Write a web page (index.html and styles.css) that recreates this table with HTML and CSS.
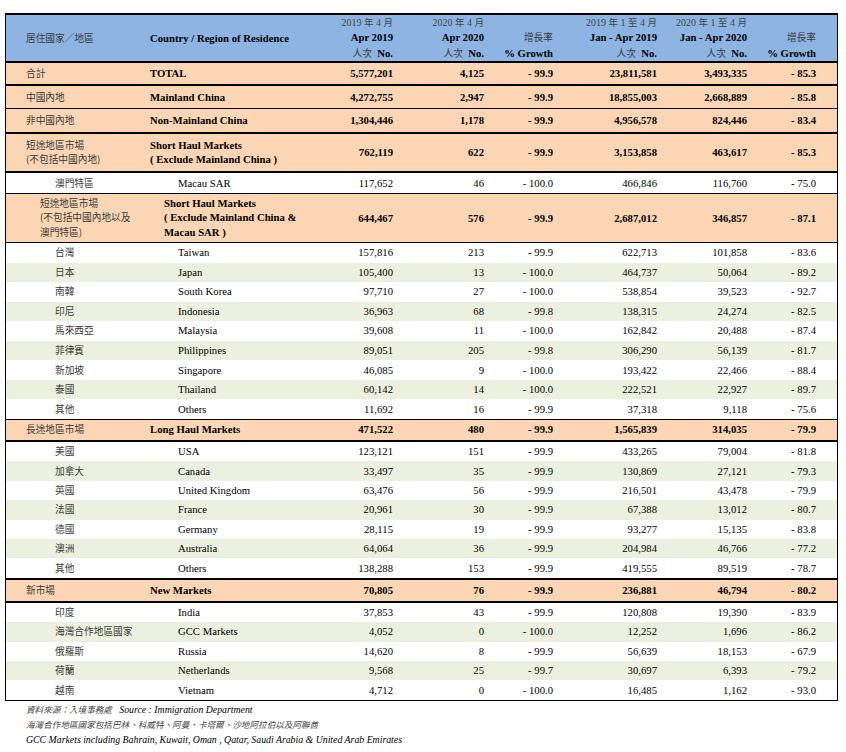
FILE: index.html
```html
<!DOCTYPE html>
<html lang="zh-Hant">
<head>
<meta charset="utf-8">
<title>Visitor Arrivals by Country / Region of Residence</title>
<link rel="stylesheet" href="styles.css">
</head>
<body>
<div class="page">
  <div class="table">
    <div class="row head">
      <div class="c c1 mid"><span class="zh">居住國家／地區</span></div>
      <div class="c c2 mid b">Country / Region of Residence</div>
      <div class="c num hd"><span class="sm">2019 <span class="zh">年</span> 4 <span class="zh">月</span></span><span class="b">Apr 2019</span><span><span class="zh">人次</span>&nbsp; <b>No.</b></span></div>
      <div class="c num hd"><span class="sm">2020 <span class="zh">年</span> 4 <span class="zh">月</span></span><span class="b">Apr 2020</span><span><span class="zh">人次</span>&nbsp; <b>No.</b></span></div>
      <div class="c num hd end"><span class="zh">增長率</span><span class="b">% Growth</span></div>
      <div class="c num hd"><span class="sm">2019 <span class="zh">年</span> 1 <span class="zh">至</span> 4 <span class="zh">月</span></span><span class="b">Jan - Apr 2019</span><span><span class="zh">人次</span>&nbsp; <b>No.</b></span></div>
      <div class="c num hd"><span class="sm">2020 <span class="zh">年</span> 1 <span class="zh">至</span> 4 <span class="zh">月</span></span><span class="b">Jan - Apr 2020</span><span><span class="zh">人次</span>&nbsp; <b>No.</b></span></div>
      <div class="c num hd end last"><span class="zh">增長率</span><span class="b">% Growth</span></div>
    </div>

    <div class="row peach h21 thick">
      <div class="c c1"><span class="zh">合計</span></div><div class="c c2 b">TOTAL</div>
      <div class="c num b">5,577,201</div><div class="c num b">4,125</div><div class="c num b">- 99.9</div><div class="c num b">23,811,581</div><div class="c num b">3,493,335</div><div class="c num b last">- 85.3</div>
    </div>
    <div class="row peach h22 thin">
      <div class="c c1"><span class="zh">中國內地</span></div><div class="c c2 b">Mainland China</div>
      <div class="c num b">4,272,755</div><div class="c num b">2,947</div><div class="c num b">- 99.9</div><div class="c num b">18,855,003</div><div class="c num b">2,668,889</div><div class="c num b last">- 85.8</div>
    </div>
    <div class="row peach h23 thick">
      <div class="c c1"><span class="zh">非中國內地</span></div><div class="c c2 b">Non-Mainland China</div>
      <div class="c num b">1,304,446</div><div class="c num b">1,178</div><div class="c num b">- 99.9</div><div class="c num b">4,956,578</div><div class="c num b">824,446</div><div class="c num b last">- 83.4</div>
    </div>
    <div class="row peach h37 thick">
      <div class="c c1 ml"><span class="zh">短途地區市場<br>(不包括中國內地)</span></div><div class="c c2 b ml">Short Haul Markets<br>( Exclude Mainland China )</div>
      <div class="c num b">762,119</div><div class="c num b">622</div><div class="c num b">- 99.9</div><div class="c num b">3,153,858</div><div class="c num b">463,617</div><div class="c num b last">- 85.3</div>
    </div>
    <div class="row h20 thin">
      <div class="c c1 sub"><span class="zh">澳門特區</span></div><div class="c c2 sub">Macau SAR</div>
      <div class="c num">117,652</div><div class="c num">46</div><div class="c num">- 100.0</div><div class="c num">466,846</div><div class="c num">116,760</div><div class="c num last">- 75.0</div>
    </div>
    <div class="row peach h48 thin">
      <div class="c c1 mid2 ml"><span class="zh">短途地區市場<br>(不包括中國內地以及<br>澳門特區)</span></div><div class="c c2 b mid2 ml">Short Haul Markets<br>( Exclude Mainland China &amp;<br>Macau SAR )</div>
      <div class="c num b">644,467</div><div class="c num b">576</div><div class="c num b">- 99.9</div><div class="c num b">2,687,012</div><div class="c num b">346,857</div><div class="c num b last">- 87.1</div>
    </div>

    <div class="row s1">
      <div class="c c1 sub"><span class="zh">台灣</span></div><div class="c c2 sub">Taiwan</div>
      <div class="c num">157,816</div><div class="c num">213</div><div class="c num">- 99.9</div><div class="c num">622,713</div><div class="c num">101,858</div><div class="c num last">- 83.6</div>
    </div>
    <div class="row s1 alt">
      <div class="c c1 sub"><span class="zh">日本</span></div><div class="c c2 sub">Japan</div>
      <div class="c num">105,400</div><div class="c num">13</div><div class="c num">- 100.0</div><div class="c num">464,737</div><div class="c num">50,064</div><div class="c num last">- 89.2</div>
    </div>
    <div class="row s1">
      <div class="c c1 sub"><span class="zh">南韓</span></div><div class="c c2 sub">South Korea</div>
      <div class="c num">97,710</div><div class="c num">27</div><div class="c num">- 100.0</div><div class="c num">538,854</div><div class="c num">39,523</div><div class="c num last">- 92.7</div>
    </div>
    <div class="row s1 alt">
      <div class="c c1 sub"><span class="zh">印尼</span></div><div class="c c2 sub">Indonesia</div>
      <div class="c num">36,963</div><div class="c num">68</div><div class="c num">- 99.8</div><div class="c num">138,315</div><div class="c num">24,274</div><div class="c num last">- 82.5</div>
    </div>
    <div class="row s1">
      <div class="c c1 sub"><span class="zh">馬來西亞</span></div><div class="c c2 sub">Malaysia</div>
      <div class="c num">39,608</div><div class="c num">11</div><div class="c num">- 100.0</div><div class="c num">162,842</div><div class="c num">20,488</div><div class="c num last">- 87.4</div>
    </div>
    <div class="row s1 alt">
      <div class="c c1 sub"><span class="zh">菲律賓</span></div><div class="c c2 sub">Philippines</div>
      <div class="c num">89,051</div><div class="c num">205</div><div class="c num">- 99.8</div><div class="c num">306,290</div><div class="c num">56,139</div><div class="c num last">- 81.7</div>
    </div>
    <div class="row s1">
      <div class="c c1 sub"><span class="zh">新加坡</span></div><div class="c c2 sub">Singapore</div>
      <div class="c num">46,085</div><div class="c num">9</div><div class="c num">- 100.0</div><div class="c num">193,422</div><div class="c num">22,466</div><div class="c num last">- 88.4</div>
    </div>
    <div class="row s1 alt">
      <div class="c c1 sub"><span class="zh">泰國</span></div><div class="c c2 sub">Thailand</div>
      <div class="c num">60,142</div><div class="c num">14</div><div class="c num">- 100.0</div><div class="c num">222,521</div><div class="c num">22,927</div><div class="c num last">- 89.7</div>
    </div>
    <div class="row s1 thin">
      <div class="c c1 sub"><span class="zh">其他</span></div><div class="c c2 sub">Others</div>
      <div class="c num">11,692</div><div class="c num">16</div><div class="c num">- 99.9</div><div class="c num">37,318</div><div class="c num">9,118</div><div class="c num last">- 75.6</div>
    </div>

    <div class="row peach h20 thick">
      <div class="c c1"><span class="zh">長途地區市場</span></div><div class="c c2 b">Long Haul Markets</div>
      <div class="c num b">471,522</div><div class="c num b">480</div><div class="c num b">- 99.9</div><div class="c num b">1,565,839</div><div class="c num b">314,035</div><div class="c num b last">- 79.9</div>
    </div>
    <div class="row s2">
      <div class="c c1 sub"><span class="zh">美國</span></div><div class="c c2 sub">USA</div>
      <div class="c num">123,121</div><div class="c num">151</div><div class="c num">- 99.9</div><div class="c num">433,265</div><div class="c num">79,004</div><div class="c num last">- 81.8</div>
    </div>
    <div class="row s2 alt">
      <div class="c c1 sub"><span class="zh">加拿大</span></div><div class="c c2 sub">Canada</div>
      <div class="c num">33,497</div><div class="c num">35</div><div class="c num">- 99.9</div><div class="c num">130,869</div><div class="c num">27,121</div><div class="c num last">- 79.3</div>
    </div>
    <div class="row s2">
      <div class="c c1 sub"><span class="zh">英國</span></div><div class="c c2 sub">United Kingdom</div>
      <div class="c num">63,476</div><div class="c num">56</div><div class="c num">- 99.9</div><div class="c num">216,501</div><div class="c num">43,478</div><div class="c num last">- 79.9</div>
    </div>
    <div class="row s2 alt">
      <div class="c c1 sub"><span class="zh">法國</span></div><div class="c c2 sub">France</div>
      <div class="c num">20,961</div><div class="c num">30</div><div class="c num">- 99.9</div><div class="c num">67,388</div><div class="c num">13,012</div><div class="c num last">- 80.7</div>
    </div>
    <div class="row s2">
      <div class="c c1 sub"><span class="zh">德國</span></div><div class="c c2 sub">Germany</div>
      <div class="c num">28,115</div><div class="c num">19</div><div class="c num">- 99.9</div><div class="c num">93,277</div><div class="c num">15,135</div><div class="c num last">- 83.8</div>
    </div>
    <div class="row s2 alt">
      <div class="c c1 sub"><span class="zh">澳洲</span></div><div class="c c2 sub">Australia</div>
      <div class="c num">64,064</div><div class="c num">36</div><div class="c num">- 99.9</div><div class="c num">204,984</div><div class="c num">46,766</div><div class="c num last">- 77.2</div>
    </div>
    <div class="row s2 thick">
      <div class="c c1 sub"><span class="zh">其他</span></div><div class="c c2 sub">Others</div>
      <div class="c num">138,288</div><div class="c num">153</div><div class="c num">- 99.9</div><div class="c num">419,555</div><div class="c num">89,519</div><div class="c num last">- 78.7</div>
    </div>

    <div class="row peach h21 thick">
      <div class="c c1"><span class="zh">新市場</span></div><div class="c c2 b">New Markets</div>
      <div class="c num b">70,805</div><div class="c num b">76</div><div class="c num b">- 99.9</div><div class="c num b">236,881</div><div class="c num b">46,794</div><div class="c num b last">- 80.2</div>
    </div>
    <div class="row s3">
      <div class="c c1 sub"><span class="zh">印度</span></div><div class="c c2 sub">India</div>
      <div class="c num">37,853</div><div class="c num">43</div><div class="c num">- 99.9</div><div class="c num">120,808</div><div class="c num">19,390</div><div class="c num last">- 83.9</div>
    </div>
    <div class="row s3 alt">
      <div class="c c1 sub"><span class="zh">海灣合作地區國家</span></div><div class="c c2 sub">GCC Markets</div>
      <div class="c num">4,052</div><div class="c num">0</div><div class="c num">- 100.0</div><div class="c num">12,252</div><div class="c num">1,696</div><div class="c num last">- 86.2</div>
    </div>
    <div class="row s3">
      <div class="c c1 sub"><span class="zh">俄羅斯</span></div><div class="c c2 sub">Russia</div>
      <div class="c num">14,620</div><div class="c num">8</div><div class="c num">- 99.9</div><div class="c num">56,639</div><div class="c num">18,153</div><div class="c num last">- 67.9</div>
    </div>
    <div class="row s3 alt">
      <div class="c c1 sub"><span class="zh">荷蘭</span></div><div class="c c2 sub">Netherlands</div>
      <div class="c num">9,568</div><div class="c num">25</div><div class="c num">- 99.7</div><div class="c num">30,697</div><div class="c num">6,393</div><div class="c num last">- 79.2</div>
    </div>
    <div class="row s3">
      <div class="c c1 sub"><span class="zh">越南</span></div><div class="c c2 sub">Vietnam</div>
      <div class="c num">4,712</div><div class="c num">0</div><div class="c num">- 100.0</div><div class="c num">16,485</div><div class="c num">1,162</div><div class="c num last">- 93.0</div>
    </div>
  </div>

  <div class="notes">
    <p><span class="zh">資料來源：入境事務處</span>&nbsp;&nbsp; Source : Immigration Department</p>
    <p><span class="zh">海灣合作地區國家包括巴林、科威特、阿曼、卡塔爾、沙地阿拉伯以及阿聯酋</span></p>
    <p>GCC Markets including Bahrain, Kuwait, Oman , Qatar, Saudi Arabia &amp; United Arab Emirates</p>
  </div>
</div>
</body>
</html>
```

FILE: styles.css
```css
html, body {
  margin: 0;
  padding: 0;
  background: #ffffff;
}

body {
  font-family: "Liberation Serif", "Noto Sans CJK TC", serif;
  font-size: 10.7px;
  color: #000;
}

.page {
  padding: 13px 0 0 5px;
}

.table {
  width: 831px;
  border-left: 1px solid #000;
  border-right: 1px solid #000;
  border-top: 2px solid #000;
  border-bottom: 1px solid #000;
}

.row {
  display: grid;
  grid-template-columns: 139px 155px 98px 91px 69px 104px 90px 85px;
  align-items: center;
  line-height: 14px;
}

.c {
  white-space: nowrap;
  padding-bottom: 1px;
}

.c1 {
  padding-left: 20px;
}

.c2 {
  padding-left: 5px;
}

.c1.sub {
  padding-left: 49px;
}

.c2.sub {
  padding-left: 33px;
}

.c1.mid2 {
  padding-left: 34px;
}

.c2.mid2 {
  padding-left: 19px;
}

.num {
  text-align: right;
  padding-right: 5px;
}

.num.last {
  padding-right: 21px;
}

.b {
  font-weight: bold;
}

.zh {
  font-family: "Noto Sans CJK TC", sans-serif;
  font-size: 9.7px;
  color: #3a3a3a;
  font-weight: normal;
}

.ml {
  line-height: 14.5px;
}

/* header */
.head {
  background: #8eb4e3;
  height: 46px;
  border-bottom: 2px solid #000;
  align-items: stretch;
}

.head .c {
  padding-bottom: 0;
}

.head .mid {
  align-self: center;
}

.head .c2 {
  align-self: center;
}

.hd {
  display: flex;
  flex-direction: column;
  justify-content: center;
  line-height: 15.3px;
}

.hd.end {
  justify-content: flex-end;
}

.hd .sm {
  font-size: 10px;
  color: #444;
}

.hd .sm .zh {
  font-size: 9.5px;
  color: #444;
}

/* row variants */
.peach {
  background: #fcd5b4;
}

.alt {
  background: #ebf1de;
}

.thick {
  border-bottom: 2px solid #000;
}

.thin {
  border-bottom: 1px solid #000;
}

.h20 { height: 20px; }
.h21 { height: 21px; }
.h22 { height: 22px; }
.h23 { height: 23px; }
.h37 { height: 37px; }
.h48 { height: 48px; }

.s1 { height: 19.56px; }
.s2 { height: 19.43px; }
.s3 { height: 19.4px; }

/* footnotes */
.notes {
  padding-left: 21px;
  padding-top: 1px;
  font-style: italic;
  font-size: 9.8px;
  line-height: 14.5px;
}

.notes p {
  margin: 0;
}

.notes .zh {
  font-size: 8.6px;
  color: #444;
}
```
